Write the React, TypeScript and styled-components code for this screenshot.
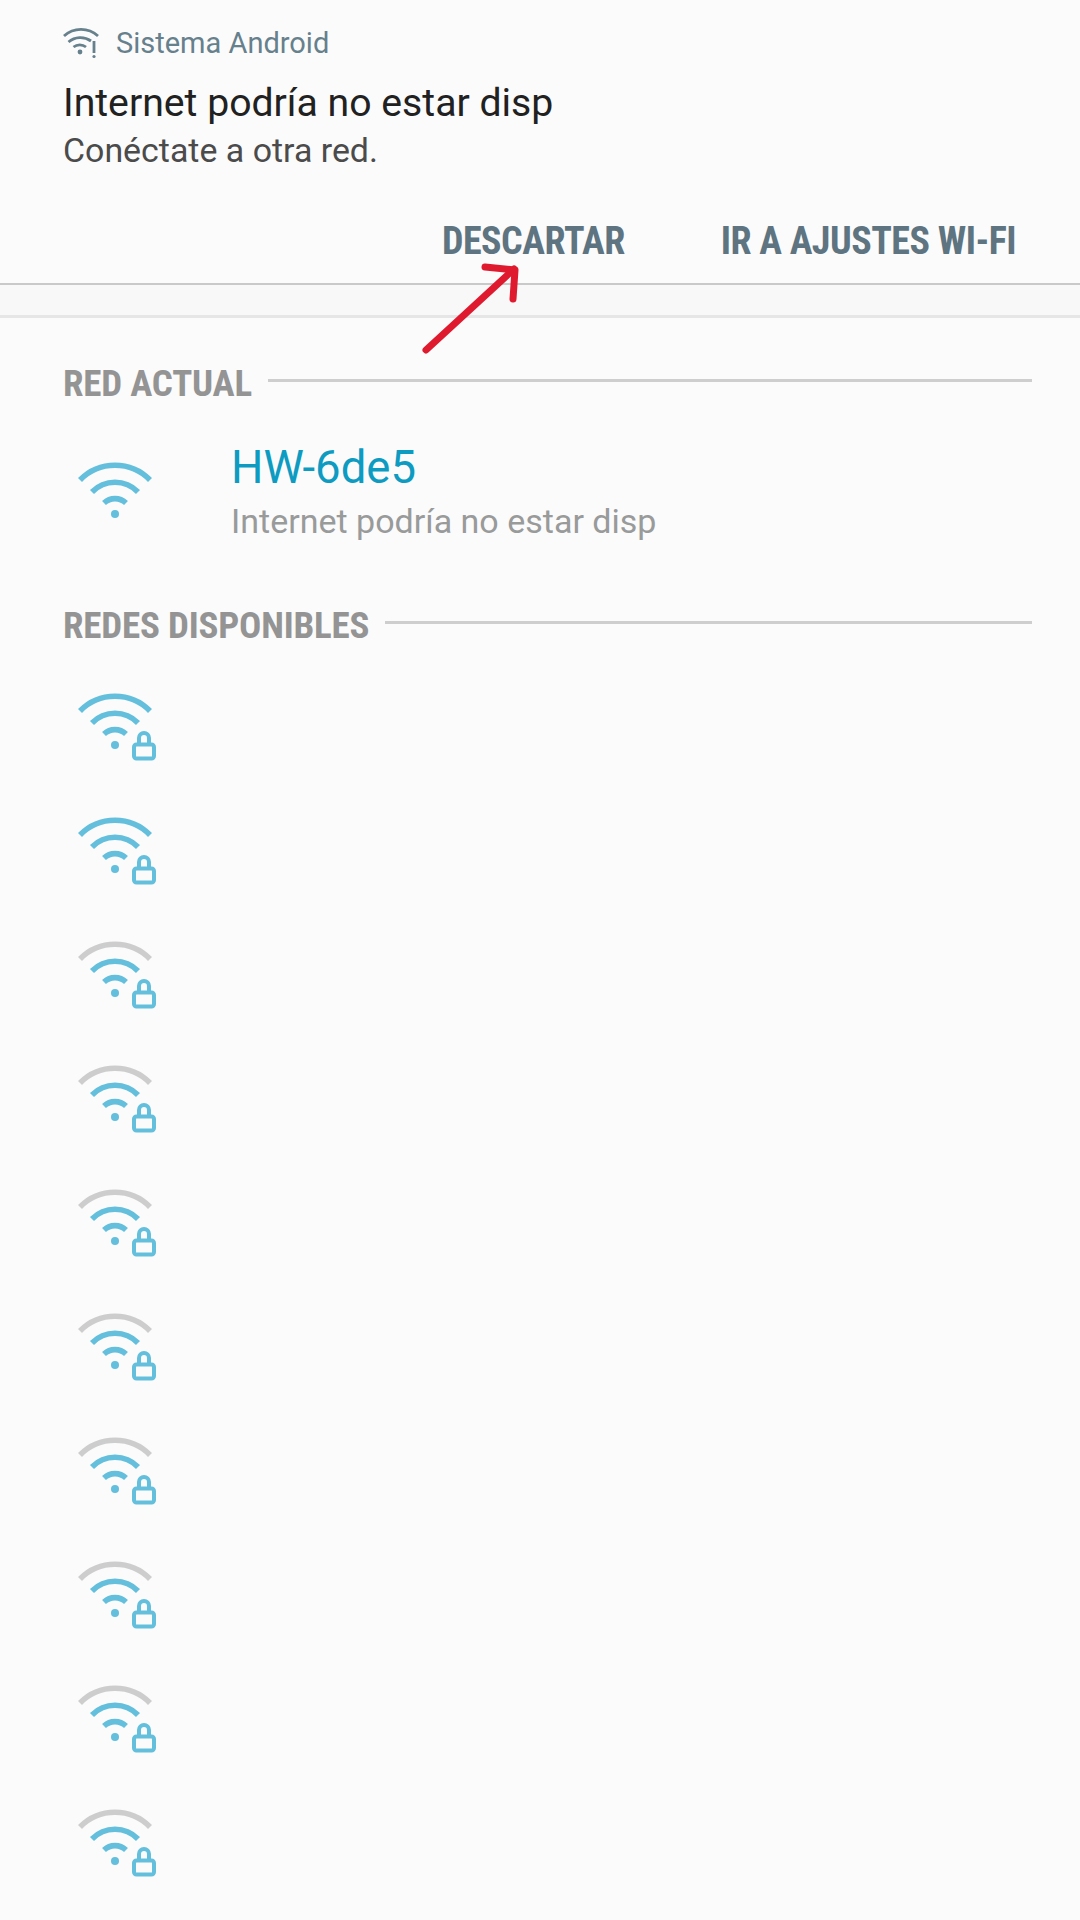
import React from "react";
import styled, { createGlobalStyle } from "styled-components";

const Global = createGlobalStyle`
  html, body { margin: 0; padding: 0; background: #fbfbfc; }
  body { font-family: Roboto, "Liberation Sans", sans-serif; }
`;

const Page = styled.div`
  position: relative;
  width: 1080px;
  height: 1920px;
  overflow: hidden;
  background: #fbfbfc;
  display: flex;
  flex-direction: column;
`;

const Notification = styled.header`
  flex: none;
  height: 285px;
  box-sizing: border-box;
  padding: 27px 64px 0 63px;
  border-bottom: 2px solid #c9c9c9;
  box-shadow: 0 1px 2px rgba(0, 0, 0, 0.12);
  display: flex;
  flex-direction: column;
`;

const AppRow = styled.div`
  display: flex;
  align-items: center;
  gap: 17px;
  height: 32px;
`;

const AppName = styled.span`
  font-size: 29px;
  color: #66808c;
`;

const NotifTitle = styled.div`
  margin-top: 22px;
  font-size: 39.2px;
  line-height: 44px;
  color: #212121;
`;

const NotifText = styled.div`
  margin-top: 4px;
  font-size: 33.9px;
  line-height: 44px;
  color: #4b4b4b;
`;

const Actions = styled.div`
  margin-top: 46px;
  display: flex;
  justify-content: flex-end;
  gap: 96px;
`;

const ActionButton = styled.span`
  font-size: 38px;
  line-height: 44px;
  font-weight: 700;
  font-stretch: 75%;
  letter-spacing: -0.5px;
  color: #5e7480;
`;

const Band = styled.div`
  flex: none;
  height: 30px;
  background: #f8f8f8;
  border-bottom: 3px solid #e6e6e6;
`;

const Content = styled.main`
  flex: none;
  padding: 0 48px 0 63px;
  display: flex;
  flex-direction: column;
`;

const SectionHeader = styled.div<{ $top: number }>`
  margin-top: ${(p) => p.$top}px;
  height: 44px;
  display: flex;
  align-items: center;
  gap: 16px;
`;

const SectionTitle = styled.span`
  font-size: 37px;
  font-weight: 700;
  font-stretch: 75%;
  letter-spacing: -0.2px;
  color: #949494;
  white-space: nowrap;
`;

const SectionRule = styled.span`
  flex: 1;
  height: 3px;
  margin-top: -5px;
  background: #cecece;
`;

const CurrentRow = styled.div`
  margin-top: 37px;
  height: 161px;
  display: flex;
  align-items: flex-start;
`;

const IconSlot = styled.div`
  width: 168px;
  padding: 17px 0 0 15px;
  box-sizing: border-box;
  flex: none;
`;

const CurrentName = styled.div`
  font-size: 45.5px;
  line-height: 52px;
  color: #0e9bc1;
`;

const CurrentStatus = styled.div`
  margin-top: 6px;
  font-size: 34px;
  line-height: 42px;
  color: #999a9a;
`;

const NetworkList = styled.div`
  margin-top: 43px;
  display: flex;
  flex-direction: column;
`;

const NetworkRow = styled.div`
  height: 124px;
  padding-left: 15px;
`;

const Annotation = styled.svg`
  position: absolute;
  left: 416px;
  top: 258px;
`;

const Icon = styled.svg`
  display: block;
`;

const BLUE = "#63bfdc";
const GREY = "#cdcdcd";

function Wifi({ lock, weak }: { lock?: boolean; weak?: boolean }) {
  return (
    <Icon width="84" height="74" viewBox="0 0 84 74" fill="none" strokeWidth="5.6">
      <path d="M2 21 A49 49 0 0 1 72 21" stroke={weak ? GREY : BLUE} />
      <path d="M14 33 A32 32 0 0 1 60 33" stroke={BLUE} />
      <path d="M26 44 A16 16 0 0 1 48 44" stroke={BLUE} />
      <circle cx="37" cy="55" r="4" fill={BLUE} />
      {lock && (
        <>
          <rect x="56" y="54.5" width="20" height="14" rx="2.5" stroke={BLUE} strokeWidth="4" />
          <path d="M61 55 V48 A5 5 0 0 1 71 48 V55" stroke={BLUE} strokeWidth="4" />
        </>
      )}
    </Icon>
  );
}

function NotifIcon() {
  return (
    <Icon width="36" height="32" viewBox="0 0 36 32" fill="none" stroke="#66808c" strokeWidth="2.8">
      <path d="M1 9 A25 25 0 0 1 35 9" />
      <path d="M5.5 15 A18 18 0 0 1 28 14" />
      <path d="M10.5 20 A10 10 0 0 1 23 20" />
      <circle cx="17" cy="25" r="2.4" fill="#66808c" stroke="none" />
      <path d="M31 14 V26" strokeWidth="2.8" />
      <circle cx="31" cy="29.5" r="1.6" fill="#66808c" stroke="none" />
    </Icon>
  );
}

export default function App() {
  const rows = [false, false, true, true, true, true, true, true, true, true];
  return (
    <Page>
      <Global />
      <Notification>
        <AppRow>
          <NotifIcon />
          <AppName>Sistema Android</AppName>
        </AppRow>
        <NotifTitle>Internet podría no estar disp</NotifTitle>
        <NotifText>Conéctate a otra red.</NotifText>
        <Actions>
          <ActionButton>DESCARTAR</ActionButton>
          <ActionButton>IR A AJUSTES WI-FI</ActionButton>
        </Actions>
      </Notification>
      <Band />
      <Content>
        <SectionHeader $top={43}>
          <SectionTitle>RED ACTUAL</SectionTitle>
          <SectionRule />
        </SectionHeader>
        <CurrentRow>
          <IconSlot>
            <Wifi />
          </IconSlot>
          <div>
            <CurrentName>HW-6de5</CurrentName>
            <CurrentStatus>Internet podría no estar disp</CurrentStatus>
          </div>
        </CurrentRow>
        <SectionHeader $top={0}>
          <SectionTitle>REDES DISPONIBLES</SectionTitle>
          <SectionRule />
        </SectionHeader>
        <NetworkList>
          {rows.map((weak, i) => (
            <NetworkRow key={i}>
              <Wifi lock weak={weak} />
            </NetworkRow>
          ))}
        </NetworkList>
      </Content>
      <Annotation width="110" height="100" viewBox="416 258 110 100" fill="none" stroke="#e01a2e" strokeWidth="7" strokeLinecap="round" strokeLinejoin="round">
        <path d="M426 350 L514 269" />
        <path d="M485 267 L515 270 L513 299" />
      </Annotation>
    </Page>
  );
}
